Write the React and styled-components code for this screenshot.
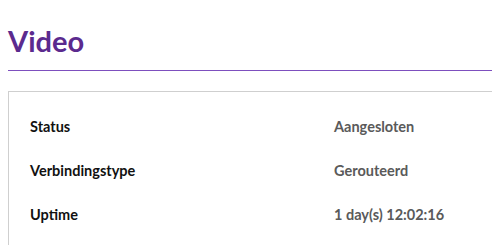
import styled, { createGlobalStyle } from "styled-components";

const GlobalStyle = createGlobalStyle`
  body {
    margin: 0;
    font-family: Lato, "Open Sans", Arial, sans-serif;
    background: #fff;
  }
`;

const Page = styled.div`
  padding: 22px 0 0 8px;
`;

const Title = styled.h1`
  margin: 0;
  font-size: 29px;
  font-weight: 700;
  color: #5b2a8e;
  line-height: 38px;
  padding-bottom: 10px;
  border-bottom: 1px solid #7d4fbe;
`;

const Panel = styled.div`
  margin-top: 20px;
  border: 1px solid #cfcfcf;
  border-right: none;
  padding: 12px 0 13px 21px;
`;

const Row = styled.div`
  display: grid;
  grid-template-columns: 304px 1fr;
  align-items: center;
  height: 44px;
  font-size: 14.5px;
  font-weight: 700;
`;

const Label = styled.span`
  color: #111;
`;

const Value = styled.span`
  color: #5a5a5a;
`;

const rows = [
  ["Status", "Aangesloten"],
  ["Verbindingstype", "Gerouteerd"],
  ["Uptime", "1 day(s) 12:02:16"],
];

export default function App() {
  return (
    <>
      <GlobalStyle />
      <Page>
        <Title>Video</Title>
        <Panel>
          {rows.map(([label, value]) => (
            <Row key={label}>
              <Label>{label}</Label>
              <Value>{value}</Value>
            </Row>
          ))}
        </Panel>
      </Page>
    </>
  );
}
